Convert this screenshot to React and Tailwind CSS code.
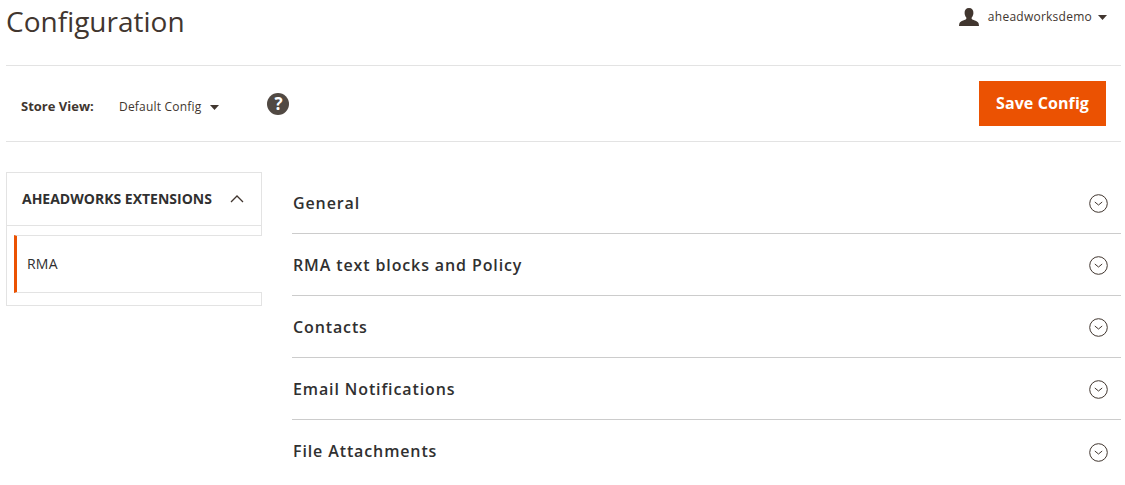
import React from "react";

const sections = ["General", "RMA text blocks and Policy", "Contacts", "Email Notifications", "File Attachments"];

const Caret = ({ className }) => (
    <svg className={className} width="9" height="5" viewBox="0 0 9 5">
        <path d="M0 0h9L4.5 5z" fill="#41362f" />
    </svg>
);

const CircleDown = () => (
    <svg className="mt-[2px]" width="19" height="19" viewBox="0 0 19 19" fill="none" stroke="#41362f" strokeWidth="1">
        <circle cx="9.5" cy="9.5" r="8.8" />
        <path d="M5.8 8l3.700 3 3.700-3" />
    </svg>
);

const User = () => (
    <svg width="20" height="18" viewBox="0 0 20 18" fill="#41362f">
        <path d="M10 0c3 0 4.600 2 4.400 5 0 1.500-.7 3.300-1.500 4.300-.5.7-.4 1.800.4 2.200 2.400 1.100 5.700 2 6.200 3.600.3 1 .4 1.900.5 2.900H0c.1-1 .2-1.900.5-2.900.5-1.600 3.800-2.500 6.200-3.600.8-.4.9-1.500.4-2.200C6.300 8.300 5.600 6.500 5.600 5 5.400 2 7 0 10 0z" />
    </svg>
);

const App = () => {
    return (
        <div className="w-[1125px] h-[485px] overflow-hidden bg-white text-[#41362f] font-['Open_Sans',sans-serif]">
            <div className="flex justify-between h-[66px] ml-[6px] mr-[4px] border-b border-[#e3e3e3]">
                <h1 className="text-[28px] leading-[38px] mt-[2px]">Configuration</h1>
                <div className="flex items-start mt-[8px] mr-[14px]">
                    <User />
                    <span className="text-[12px] tracking-[0.25px] leading-[18px] ml-[9px] text-[#41362f]">aheadworksdemo</span>
                    <Caret className="ml-[6px] mt-[7px]" />
                </div>
            </div>
            <div className="flex items-center justify-between h-[76px] ml-[6px] mr-[4px] border-b border-[#e3e3e3]">
                <div className="flex items-center ml-[15px]">
                    <span className="text-[13px] font-bold w-[98px] mt-[7px]">Store View:</span>
                    <span className="text-[12px] tracking-[0.2px] mt-[7px]">Default Config</span>
                    <Caret className="ml-[9px] mt-[8px]" />
                    <span className="flex items-center justify-center w-[22px] h-[22px] ml-[48px] rounded-full bg-[#514943] text-white text-[17px] font-bold leading-none">?</span>
                </div>
                <button className="w-[127px] h-[45px] mr-[15px] pb-[2px] bg-[#eb5202] text-white text-[16px] font-bold tracking-[0.1px]">Save Config</button>
            </div>
            <div className="flex mt-[30px] ml-[6px]">
                <div className="w-[256px] h-[134px] border border-[#e3e3e3] shrink-0">
                    <div className="flex items-center justify-between h-[53px] pl-[15px] pr-[17px] pb-[2px] border-b border-[#e3e3e3]">
                        <span className="text-[14px] font-bold text-[#303030]">AHEADWORKS EXTENSIONS</span>
                        <svg className="mt-[2px]" width="14" height="8" viewBox="0 0 14 8" fill="none" stroke="#41362f" strokeWidth="1.300">
                            <path d="M1 7l6-6 6 6" />
                        </svg>
                    </div>
                    <div className="relative flex items-center h-[58px] mt-[9px] ml-[7px] mr-[-1px] pl-[10px] pb-[2px] bg-white border-t border-b border-[#e3e3e3] border-l-[3px] border-l-[#eb5202] text-[14px] tracking-[0.2px] text-[#303030]">RMA</div>
                </div>
                <div className="w-[829px] ml-[30px]">
                    {sections.map((s, i) => (
                        <div key={s} className={`flex items-center justify-between h-[62px] pr-[13px] ${i < 4 ? "border-b border-[#cccccc]" : ""}`}>
                            <span className="ml-[1px] text-[16px] font-semibold tracking-[0.88px] text-[#303030]">{s}</span>
                            <CircleDown />
                        </div>
                    ))}
                </div>
            </div>
        </div>
    );
};

export default App;
